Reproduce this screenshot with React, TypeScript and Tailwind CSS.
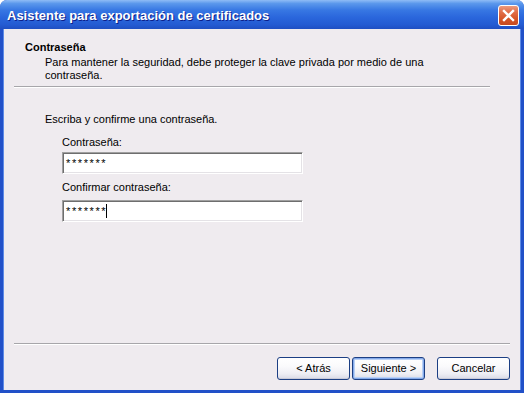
import React from "react";

function XPButton({ label, focused, className = "" }: { label: string; focused?: boolean; className?: string }) {
  return (
    <div
      className={
        "w-[73px] h-[23px] rounded-[3px] border border-[#1c3f84] flex items-center justify-center text-[11px] leading-[13px] text-black bg-[linear-gradient(to_bottom,#ffffff_0%,#fafafc_40%,#eeeef4_75%,#d9dae6_100%)] " +
        (focused
          ? "shadow-[inset_0_0_0_1px_#84a9ea,inset_0_0_0_2px_#b9d0f5] "
          : "shadow-[inset_0_-1px_0_#c9cad8] ") +
        className
      }
    >
      {label}
    </div>
  );
}

function TextBox({ value, caret }: { value: string; caret?: boolean }) {
  return (
    <div className="ml-[59px] w-[241px] h-[22px] bg-white border border-t-[#a0a0a0] border-l-[#a0a0a0] border-r-white border-b-white shadow-[inset_1px_1px_0_#6e6e6e,inset_-1px_-1px_0_#e4e2e6] flex items-center pl-[3px]">
      <span className="text-[11px] leading-[13px] tracking-[1.6px] text-black">{value}</span>
      {caret && <span className="w-px h-[14px] bg-black -ml-[1px]" />}
    </div>
  );
}

export default function App() {
  return (
    <div className="w-[524px] h-[393px] flex flex-col bg-[#2150c8] rounded-t-[7px] overflow-hidden font-['Liberation_Sans',Arial,sans-serif]">
      <div className="h-[29px] shrink-0 flex items-start pl-[7px] pr-[5px] bg-[linear-gradient(to_bottom,#8fbcf6_0%,#5b98ec_12%,#3777e3_35%,#2a66dc_60%,#245bd2_85%,#1f4fc2_100%)]">
        <span className="flex-1 mt-[8px] text-white font-bold text-[13px] leading-[16px] whitespace-nowrap [text-shadow:1px_1px_0_#0c1f8a]">
          Asistente para exportación de certificados
        </span>
        <div className="mt-[5px] w-[21px] h-[21px] rounded-[3px] border border-white bg-[linear-gradient(to_bottom,#ec9b7e_0%,#e2714c_30%,#d55426_70%,#c64a1f_100%)] flex items-center justify-center">
          <svg width="19" height="19" viewBox="0 0 19 19">
            <path d="M5 5 L14 14 M14 5 L5 14" stroke="white" strokeWidth="2.4" strokeLinecap="square" />
          </svg>
        </div>
      </div>
      <div className="flex-1 mx-[3px] mb-[3px] bg-[#efebef] flex flex-col text-[11px] leading-[13px] text-black border-l border-l-[#5d8ae6] border-r border-r-[#5d8ae6]">
        <div className="pt-[12px] pl-[21px] font-bold">Contraseña</div>
        <div className="mt-[2px] pl-[41px] whitespace-nowrap">
          Para mantener la seguridad, debe proteger la clave privada por medio de una
          <br />
          contraseña.
        </div>
        <div className="mt-[4px] ml-[10px] w-[476px] border-t border-t-[#a7a6aa] border-b border-b-white" />
        <div className="mt-[25px] pl-[41px]">Escriba y confirme una contraseña.</div>
        <div className="mt-[10px] pl-[58px]">Contraseña:</div>
        <div className="mt-[3px] -ml-px">
          <TextBox value="*******" />
        </div>
        <div className="mt-[7px] pl-[58px]">Confirmar contraseña:</div>
        <div className="mt-[6px] -ml-px">
          <TextBox value="*******" caret />
        </div>
        <div className="flex-1" />
        <div className="ml-[10px] mr-[10px] border-t border-t-[#a7a6aa] border-b border-b-white" />
        <div className="mt-[12px] mb-[10px] flex justify-end pr-[10px]">
          <XPButton label="< Atrás" />
          <XPButton label="Siguiente >" focused className="ml-[2px]" />
          <XPButton label="Cancelar" className="ml-[12px]" />
        </div>
      </div>
    </div>
  );
}
